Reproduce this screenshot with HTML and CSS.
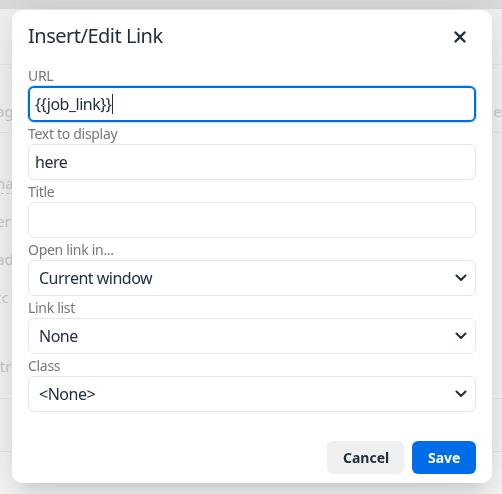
FILE: index.html
```html
<!DOCTYPE html>
<html>
    <head>
        <title>Insert/Edit Link</title>
        <meta charset="UTF-8">
        <link rel="stylesheet" href="styles.css">
    </head>
    <body>
        <div class="page">
            <div class="page-top"></div>
            <div class="page-row row-line"></div>
            <div class="page-row row-first"><span>ag</span><span class="right">er</span></div>
            <div class="page-row row-line row-line-near"></div>
            <div class="page-row row-gap"><span class="tag">na</span></div>
            <div class="page-row"><span>er</span></div>
            <div class="page-row"><span>ad</span></div>
            <div class="page-row"><span>tc</span></div>
            <div class="page-row row-big"><span>itr</span></div>
            <div class="page-row row-line row-line-near"></div>
            <div class="page-row row-line row-line-last"></div>
        </div>

        <div class="overlay">
            <div class="dialog">
                <div class="dialog-header">
                    <h1>Insert/Edit Link</h1>
                    <button class="close">
                        <svg width="12" height="12" viewBox="0 0 12 12">
                            <path d="M1.5 1.5 L10.5 10.5 M10.5 1.5 L1.5 10.5" stroke="#222f3e" stroke-width="2.4" stroke-linecap="round"/>
                        </svg>
                    </button>
                </div>
                <div class="dialog-body">
                    <div class="field">
                        <label>URL</label>
                        <div class="input focused"><span>{{job_link}}</span><i class="caret"></i></div>
                    </div>
                    <div class="field">
                        <label>Text to display</label>
                        <div class="input"><span>here</span></div>
                    </div>
                    <div class="field">
                        <label>Title</label>
                        <div class="input"></div>
                    </div>
                    <div class="field">
                        <label>Open link in...</label>
                        <div class="select"><span>Current window</span>
                            <svg width="12" height="8" viewBox="0 0 12 8"><path d="M1.5 1.5 L6 6 L10.5 1.5" fill="none" stroke="#222f3e" stroke-width="2" stroke-linecap="round" stroke-linejoin="round"/></svg>
                        </div>
                    </div>
                    <div class="field">
                        <label>Link list</label>
                        <div class="select"><span>None</span>
                            <svg width="12" height="8" viewBox="0 0 12 8"><path d="M1.5 1.5 L6 6 L10.5 1.5" fill="none" stroke="#222f3e" stroke-width="2" stroke-linecap="round" stroke-linejoin="round"/></svg>
                        </div>
                    </div>
                    <div class="field">
                        <label>Class</label>
                        <div class="select"><span>&lt;None&gt;</span>
                            <svg width="12" height="8" viewBox="0 0 12 8"><path d="M1.5 1.5 L6 6 L10.5 1.5" fill="none" stroke="#222f3e" stroke-width="2" stroke-linecap="round" stroke-linejoin="round"/></svg>
                        </div>
                    </div>
                </div>
                <div class="dialog-footer">
                    <button class="btn btn-secondary">Cancel</button>
                    <button class="btn btn-primary">Save</button>
                </div>
            </div>
        </div>
    </body>
</html>
```

FILE: styles.css
```css
* {
    margin: 0;
    padding: 0;
    box-sizing: border-box;
    font-family: "Noto Sans", "Open Sans", sans-serif;
}
body {
    background-color: #f3f3f3;
    width: 502px;
    height: 494px;
    overflow: hidden;
}

/* pagina atras do dialogo */
.page-top {
    height: 9px;
    background-color: #dcdcdc;
}
.page-row {
    display: flex;
    justify-content: space-between;
    align-items: center;
    height: 38px;
    color: #c8c8c8;
    font-size: 15px;
}
.page-row span {
    margin-left: -4px;
}
.page-row .right {
    margin-right: -6px;
}
.row-line {
    height: 1px;
    background-color: #e6e6e6;
    margin-top: 55px;
}
.row-line-near {
    margin-top: 0;
}
.row-line-last {
    margin-top: 52px;
}
.row-first {
    height: 67px;
    padding-top: 24px;
}
.row-gap {
    margin-top: 31px;
}
.row-big {
    height: 82px;
    align-items: flex-start;
    padding-top: 40px;
}
.tag {
    border-bottom: 1px dashed #c8c8c8;
}

/* dialogo */
.overlay {
    position: fixed;
    top: 0;
    left: 0;
    right: 0;
    bottom: 0;
    padding: 10px 10px 0 12px;
}
.dialog {
    background-color: #fff;
    border-radius: 10px;
    box-shadow: 0 16px 16px -10px rgba(34, 47, 62, 0.15), 0 0 40px 1px rgba(34, 47, 62, 0.15);
    color: #222f3e;
}
.dialog-header {
    display: flex;
    justify-content: space-between;
    align-items: center;
    padding: 14px 16px 0 16px;
}
.dialog-header h1 {
    font-size: 20px;
    font-weight: normal;
    line-height: 24px;
    letter-spacing: -0.5px;
}
.close {
    display: flex;
    background: none;
    border: none;
    margin-right: 10px;
    margin-top: 1px;
}
.dialog-body {
    padding: 16px 16px 21px 16px;
}
.field label {
    display: block;
    font-size: 14px;
    line-height: 18px;
    padding-top: 3px;
    margin-bottom: 1px;
    color: #737880;
    letter-spacing: -0.3px;
}
.input, .select {
    display: flex;
    align-items: center;
    height: 36px;
    border: 1px solid #e6e6e6;
    border-radius: 6px;
    font-size: 16px;
    color: #222f3e;
    padding: 0 6px;
    letter-spacing: -0.5px;
}
.input.focused {
    border: 2px solid #006ce7;
    box-shadow: 0 0 0 1px rgba(0, 108, 231, 0.2);
    padding: 0 5px;
}
.caret {
    display: block;
    width: 1px;
    height: 20px;
    background-color: #222f3e;
    margin-left: 1px;
}
.select {
    justify-content: space-between;
    padding: 0 8px 0 10px;
}
.dialog-footer {
    display: flex;
    justify-content: flex-end;
    gap: 8px;
    padding: 8px 16px 9px 16px;
}
.btn {
    height: 33px;
    border: none;
    border-radius: 6px;
    font-size: 14px;
    font-weight: bold;
    padding: 0 16px;
}
.btn-secondary {
    background-color: #f0f0f0;
    color: #222f3e;
    width: 77px;
}
.btn-primary {
    background-color: #006ce7;
    color: #fff;
    width: 64px;
}
```
